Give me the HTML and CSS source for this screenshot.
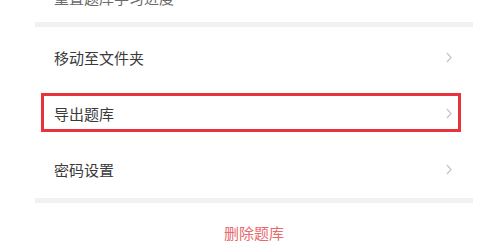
FILE: index.html
```html
<!DOCTYPE html>
<html lang="zh-CN">
<head>
    <meta charset="UTF-8">
    <meta name="viewport" content="width=device-width, initial-scale=1.0">
    <title>题库设置</title>
    <link rel="stylesheet" href="styles.css">
</head>
<body>
    <div class="panel">
        <!-- previous group, cut off at the top -->
        <div class="row row-top">
            <span class="label">重置题库学习进度</span>
        </div>
        <div class="divider"></div>

        <div class="row">
            <span class="label">移动至文件夹</span>
            <svg class="chevron" viewBox="0 0 6 11"><path d="M1 1 L5 5.5 L1 10"/></svg>
        </div>
        <div class="row">
            <span class="label">导出题库</span>
            <svg class="chevron" viewBox="0 0 6 11"><path d="M1 1 L5 5.5 L1 10"/></svg>
            <!-- highlight frame from the screenshot -->
            <div class="highlight"></div>
        </div>
        <div class="row">
            <span class="label">密码设置</span>
            <svg class="chevron" viewBox="0 0 6 11"><path d="M1 1 L5 5.5 L1 10"/></svg>
        </div>
        <div class="divider"></div>

        <div class="danger">删除题库</div>
    </div>
</body>
</html>
```

FILE: styles.css
```css
/* General Styling */
body {
    margin: 0;
    padding: 0;
    background-color: #ffffff;
    font-family: "Noto Sans CJK SC", "Noto Sans", sans-serif;
    overflow: hidden;
}
.panel {
    margin-left: 35px;
    width: 438px;
}
.row {
    position: relative;
    height: 56px;
    display: flex;
    align-items: center;
    justify-content: space-between;
    padding: 0 21px 0 19px;
}
.row-top {
    height: 50px;
    margin-top: -28px;
}
.label {
    font-size: 15px;
    color: #3a3a3a;
}
.row-top .label {
    color: #6a6a6a;
}
.chevron {
    width: 6px;
    height: 11px;
    fill: none;
    stroke: #c4c4c4;
    stroke-width: 1.2;
}
.divider {
    height: 5px;
    margin: 1px 0 0;
    background-color: #f1f1f1;
}
.row-top + .divider {
    margin: 0 0 2px;
}
.danger {
    text-align: center;
    font-size: 15px;
    color: #e86a6c;
    padding-top: 19px;
}
.highlight {
    position: absolute;
    left: 6px;
    top: 8px;
    width: 414px;
    height: 33px;
    border: 3px solid #e8333a;
}
```
